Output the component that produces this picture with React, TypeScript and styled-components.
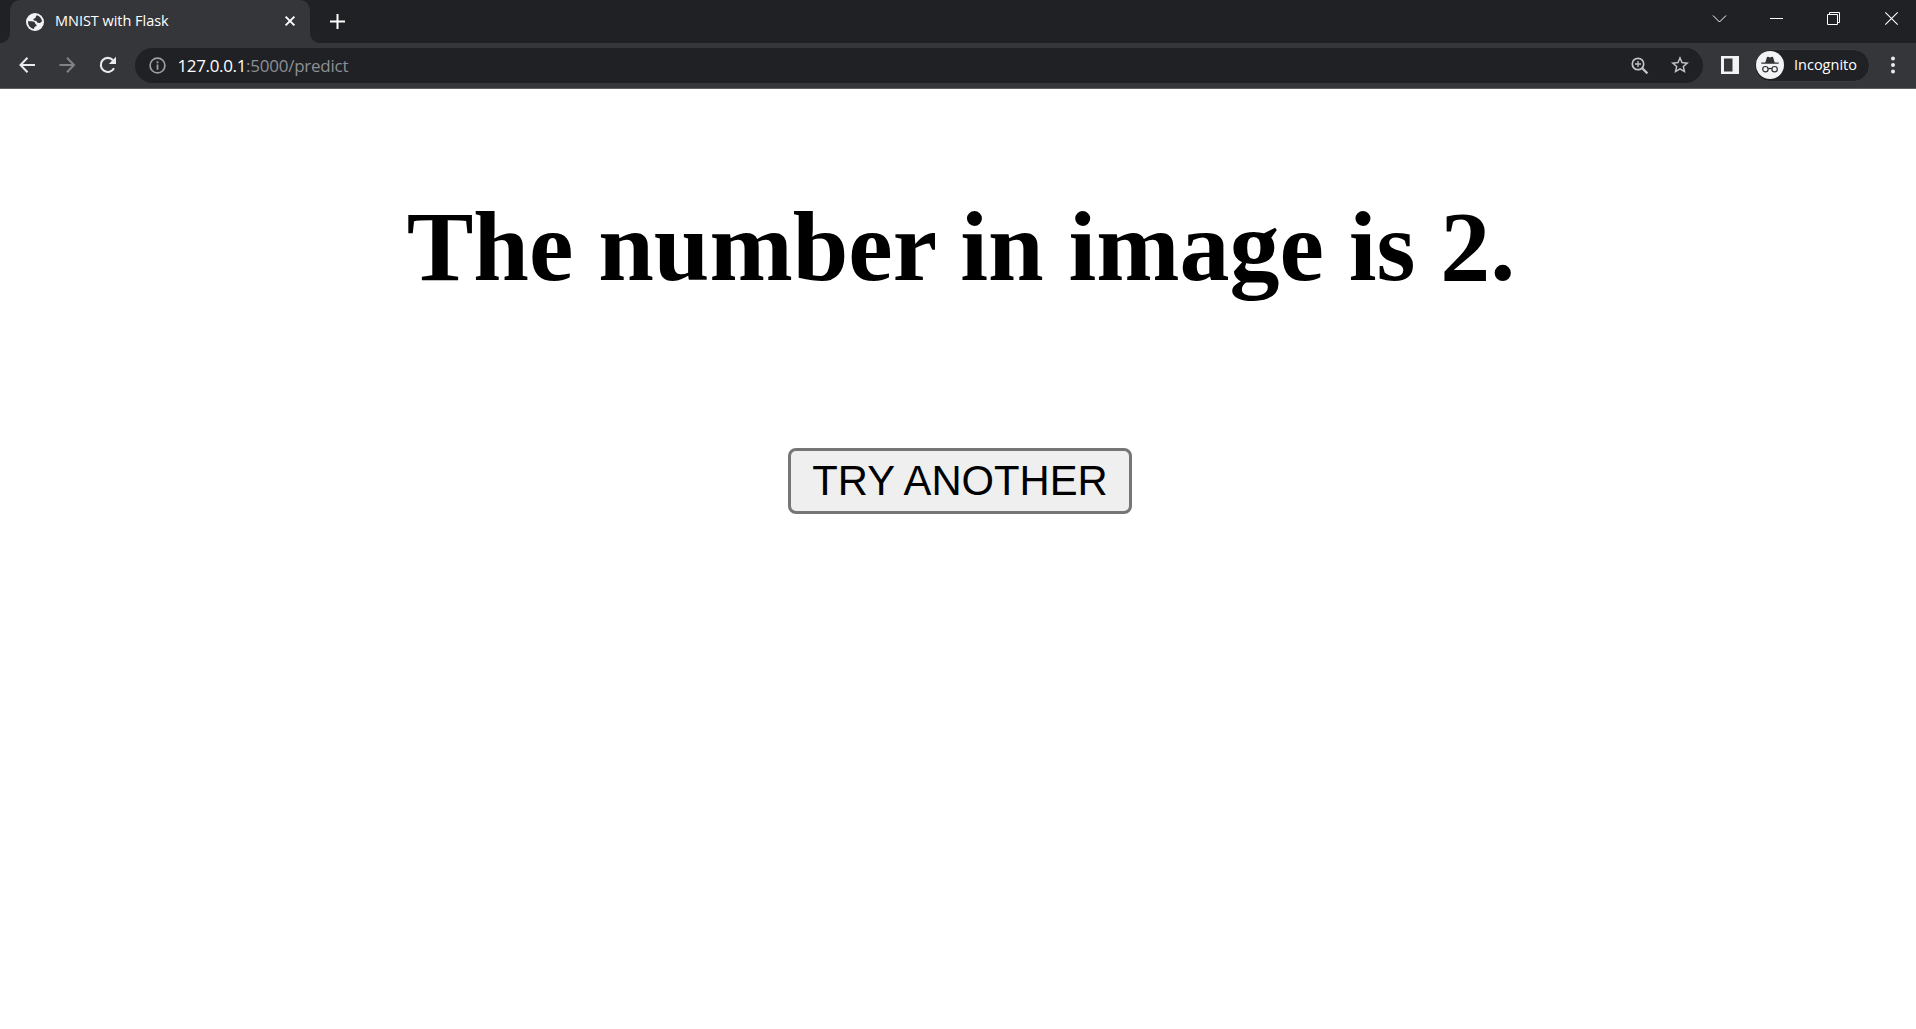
import React from "react";
import styled, { createGlobalStyle } from "styled-components";

const uiFont = '"Open Sans", "Noto Sans", sans-serif';

const GlobalStyle = createGlobalStyle`
  html, body { margin: 0; padding: 0; background: #fff; }
  *, *::before, *::after { box-sizing: border-box; }
  svg { display: block; flex: none; overflow: visible; }
`;

const Window = styled.div`
  display: flex;
  flex-direction: column;
  height: 100vh;
  overflow: hidden;
  font-family: ${uiFont};
`;

const TabStrip = styled.header`
  display: flex;
  flex: none;
  height: 43px;
  padding-left: 10px;
  background: #202124;
`;

const Tab = styled.div`
  position: relative;
  display: flex;
  align-items: center;
  width: 300px;
  height: 43px;
  padding: 0 15px 0 16px;
  background: #35363a;
  border-radius: 10px 10px 0 0;

  &::before,
  &::after {
    content: "";
    position: absolute;
    bottom: 0;
    width: 10px;
    height: 10px;
  }
  &::before {
    left: -10px;
    background: radial-gradient(circle at 0 0, transparent 9.5px, #35363a 10.5px);
  }
  &::after {
    right: -10px;
    background: radial-gradient(circle at 100% 0, transparent 9.5px, #35363a 10.5px);
  }
`;

const TabTitle = styled.span`
  flex: 1;
  margin: 0 0 2px 11px;
  font-size: 14.5px;
  line-height: 20px;
  letter-spacing: -0.03px;
  white-space: nowrap;
  color: #fff;
`;

const IconButton = styled.button<{ $w: number }>`
  display: flex;
  flex: none;
  align-items: center;
  justify-content: center;
  width: ${(p) => p.$w}px;
  height: 100%;
  padding: 0;
  border: 0;
  background: none;
`;

const CloseTab = styled(IconButton)`
  height: 20px;
  margin-bottom: 1px;
`;

const NewTab = styled(IconButton)`
  margin-left: 10px;
`;

const WindowControls = styled.div`
  display: flex;
  height: 37px;
  margin-left: auto;
  margin-right: -4px;

  & > :last-child {
    margin-left: 1px;
  }
`;

const Toolbar = styled.nav`
  display: flex;
  flex: none;
  align-items: center;
  height: 46px;
  padding: 0 1px 1px 8px;
  background: #35363a;
  border-bottom: 1px solid #5f6063;
`;

const AddressBar = styled.div`
  display: flex;
  flex: 1;
  align-items: center;
  height: 35px;
  margin: 0 3px 0 7px;
  padding: 0 3px 0 14px;
  border-radius: 18px;
  background: #202124;
`;

const Address = styled.span`
  flex: 1;
  margin: 1px 0 0 11.5px;
  font-size: 17px;
  line-height: 24px;
  white-space: nowrap;
  color: #8d9094;
`;

const Host = styled.span`
  letter-spacing: -0.35px;
  color: #fff;
`;

const Path = styled.span`
  letter-spacing: -0.25px;
`;

const Profile = styled.div`
  display: flex;
  flex: none;
  align-items: center;
  width: 116px;
  height: 33px;
  padding-left: 1px;
  border: 1px solid #3c3d41;
  border-radius: 17px;
  background: #202124;
`;

const ProfileName = styled.span`
  margin-left: 10px;
  font-size: 14.5px;
  line-height: 20px;
  color: #fff;
`;

const Page = styled.main`
  display: flex;
  flex: 1;
  flex-direction: column;
  align-items: center;
  padding-top: 100px;
  background: #fff;
`;

const Heading = styled.h1`
  margin: 0;
  padding-left: 6px;
  font: bold 100px/115px "Liberation Serif", "Times New Roman", serif;
  letter-spacing: -0.03px;
  white-space: nowrap;
  color: #000;
`;

const TryButton = styled.button`
  width: 344px;
  height: 66px;
  margin: 144px 0 0 4px;
  padding: 0;
  border: 3px solid #767676;
  border-radius: 8px;
  background: #efefef;
  font: 41.75px/60px "Liberation Sans", Arial, sans-serif;
  color: #000;
  white-space: nowrap;
`;

const light = "#e8eaed";

const Globe = () => (
  <svg width="18" height="18" viewBox="0 0 18 18">
    <circle cx="9" cy="9" r="9" fill="#f1f3f4" />
    <path
      d="M2 8.2h3.6c2 0 3.6.7 3.6 2.4 0 1.2 1.5.6 1.5 1.7 0 1.3-1.7 1-2.3 1.9-.4.7 0 1.6-.9 1.7C4.4 15.3 2 12.5 2 9zM10.8 2.2c2.8.7 4.8 3 5.2 6-.9 1.4-1.8 1.7-3 1.7-1.5 0-1.9-.4-2.3-1.4-.5-1-3.3-.4-3.3-1.9 0-1.3 1.5-1 2.1-1.9.4-.7.3-1.7 1.3-2.5z"
      fill="#35363a"
    />
  </svg>
);

const Cross = () => (
  <svg width="10" height="10" viewBox="0 0 10 10" stroke="#fff" strokeWidth="1.9">
    <path d="M.6.6l8.8 8.8M9.4.6L.6 9.4" />
  </svg>
);

const Plus = () => (
  <svg width="15" height="15" viewBox="0 0 15 15" stroke="#fff" strokeWidth="2">
    <path d="M7.5 0v15M0 7.5h15" />
  </svg>
);

const Arrow = ({ forward = false }: { forward?: boolean }) => (
  <svg
    width="16"
    height="16"
    viewBox="0 0 16 16"
    fill="none"
    stroke={forward ? "#818286" : light}
    strokeWidth="2"
  >
    <path d={forward ? "M8 .8L15 8l-7 7.2M15 8H.5" : "M8.500.8L1.500 8l7 7.200M1.500 8H16"} />
  </svg>
);

const Reload = () => (
  <svg width="18" height="18" viewBox="0 0 18 18">
    <path d="M15 12.2A7 7 0 1 1 14 4.2" fill="none" stroke={light} strokeWidth="2.1" />
    <path d="M17 .8v7.2H9.8z" fill={light} />
  </svg>
);

const Info = () => (
  <svg width="17" height="17" viewBox="0 0 17 17" fill="none" stroke="#9aa0a6">
    <circle cx="8.5" cy="8.5" r="7.4" strokeWidth="1.7" />
    <path d="M8.5 7.5v5.2M8.5 4.3v1.9" strokeWidth="1.8" />
  </svg>
);

const ZoomIn = () => (
  <svg width="18" height="17" viewBox="0 0 18 17" fill="none" stroke="#c1c3c6">
    <circle cx="7" cy="7" r="5.7" strokeWidth="1.7" />
    <path d="M11 11l5.4 5.4" strokeWidth="2.3" />
    <path d="M7 4v6M4 7h6" strokeWidth="1.3" />
  </svg>
);

const Star = () => (
  <svg width="18" height="18" viewBox="2 2 20 20" fill="#c1c3c6">
    <path d="M22 9.24l-7.19-.62L12 2 9.19 8.63 2 9.24l5.46 4.73L5.82 21 12 17.27 18.18 21l-1.63-7.03L22 9.24zM12 15.4l-3.76 2.27 1-4.28-3.32-2.88 4.38-.38L12 6.1l1.71 4.04 4.38.38-3.32 2.88 1 4.28L12 15.4z" />
  </svg>
);

const SidePanel = () => (
  <svg width="18" height="18" viewBox="0 0 18 18">
    <path d="M0 0h18v18H0zM3 2.5v13h8.5v-13z" fillRule="evenodd" fill="#f1f3f4" />
  </svg>
);

const IncognitoBadge = () => (
  <svg width="28" height="28" viewBox="0 0 28 28">
    <circle cx="14" cy="14" r="14" fill="#f1f3f4" />
    <path d="M5.3 12.7v-1.1h4l1.6-5.3c.2-.6.6-.8 1.1-.6l2 .7 2-.7c.5-.2.9 0 1.1.6l1.6 5.3h4v1.1z" fill="#303135" />
    <g fill="none" stroke="#303135" strokeWidth="1.2">
      <circle cx="9.4" cy="18.2" r="2.7" />
      <circle cx="18.6" cy="18.2" r="2.7" />
      <path d="M12.1 17.9c1.3-.7 2.5-.7 3.8 0" />
    </g>
  </svg>
);

const Dots = () => (
  <svg width="4" height="18" viewBox="0 0 4 18" fill={light}>
    <circle cx="2" cy="2.5" r="2" />
    <circle cx="2" cy="9" r="2" />
    <circle cx="2" cy="15.5" r="2" />
  </svg>
);

const controlPaths = {
  menu: "M0 3.5l6.5 6.5L13 3.5",
  minimize: "M0 6.5h13",
  restore: "M.5 2.5h10v10H.5zM2.5 2.5v-2h10v10h-2",
  close: "M.3.3l12.4 12.4M12.7.3L.3 12.7",
};

const ControlIcon = ({ kind }: { kind: keyof typeof controlPaths }) => (
  <svg width="13" height="13" viewBox="0 0 13 13" fill="none" stroke="#fff" strokeWidth={kind === "close" ? 1.1 : 1}>
    <path d={controlPaths[kind]} />
  </svg>
);

export default function App() {
  return (
    <Window>
      <GlobalStyle />
      <TabStrip>
        <Tab>
          <Globe />
          <TabTitle>MNIST with Flask</TabTitle>
          <CloseTab $w={10} aria-label="Close tab"><Cross /></CloseTab>
        </Tab>
        <NewTab $w={35} aria-label="New tab"><Plus /></NewTab>
        <WindowControls>
          {(Object.keys(controlPaths) as (keyof typeof controlPaths)[]).map((kind) => (
            <IconButton key={kind} $w={57} aria-label={kind}>
              <ControlIcon kind={kind} />
            </IconButton>
          ))}
        </WindowControls>
      </TabStrip>
      <Toolbar>
        <IconButton $w={38} aria-label="Back"><Arrow /></IconButton>
        <IconButton $w={42} aria-label="Forward"><Arrow forward /></IconButton>
        <IconButton $w={40} aria-label="Reload"><Reload /></IconButton>
        <AddressBar>
          <Info />
          <Address>
            <Host>127.0.0.1</Host>
            <Path>:5000/predict</Path>
          </Address>
          <IconButton $w={40} aria-label="Zoom"><ZoomIn /></IconButton>
          <IconButton $w={40} aria-label="Bookmark"><Star /></IconButton>
        </AddressBar>
        <IconButton $w={48} aria-label="Side panel"><SidePanel /></IconButton>
        <Profile>
          <IncognitoBadge />
          <ProfileName>Incognito</ProfileName>
        </Profile>
        <IconButton $w={45} aria-label="Menu"><Dots /></IconButton>
      </Toolbar>
      <Page>
        <Heading>The number in image is 2.</Heading>
        <TryButton>TRY ANOTHER</TryButton>
      </Page>
    </Window>
  );
}
